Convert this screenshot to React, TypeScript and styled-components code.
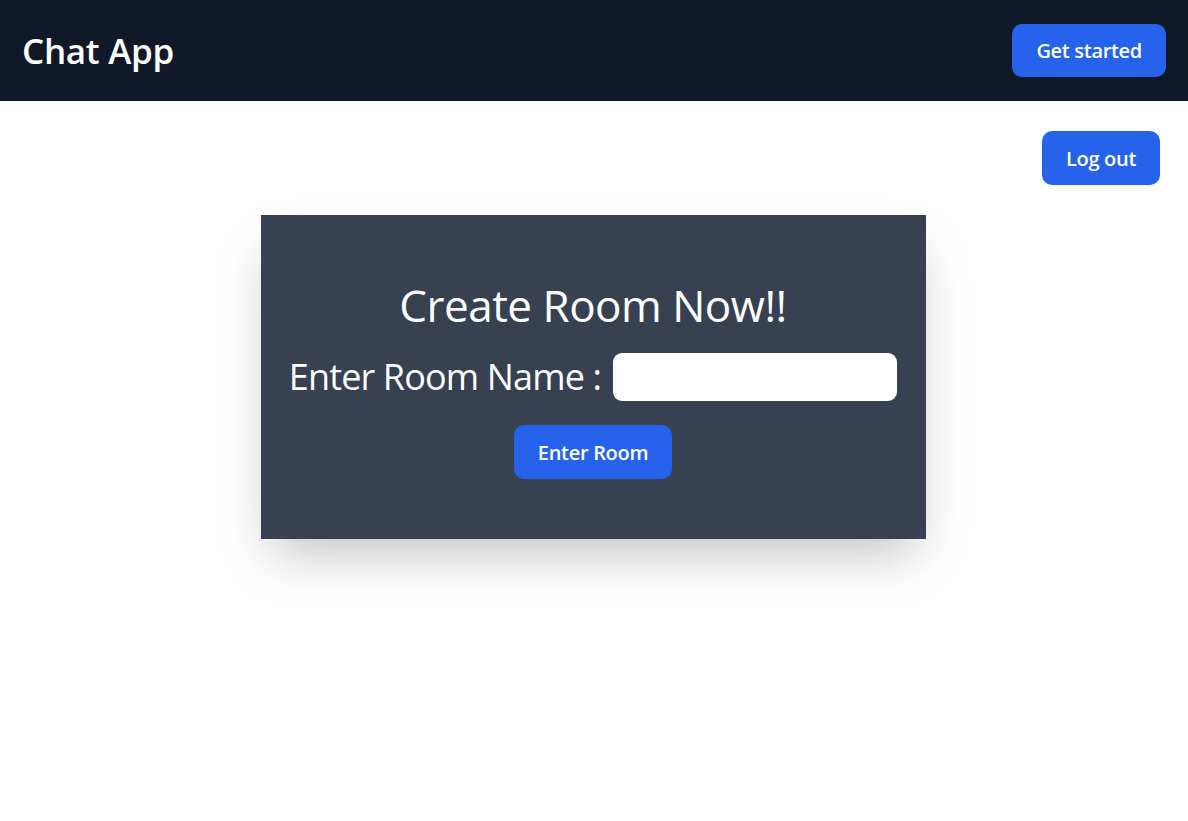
import React, { useState } from "react";
import styled, { createGlobalStyle } from "styled-components";

const COLOR = {
  nav: "#111827",
  card: "#374151",
  brand: "#2563eb",
  white: "#ffffff",
};

const GlobalStyle = createGlobalStyle`
  html, body {
    margin: 0;
    padding: 0;
    background: #ffffff;
    font-family: "Open Sans", "Noto Sans", sans-serif;
  }
  * {
    box-sizing: border-box;
  }
`;

const Page = styled.div`
  min-height: 100vh;
  background: #ffffff;
`;

const NavBar = styled.nav`
  height: 101px;
  background: ${COLOR.nav};
  display: flex;
  align-items: center;
  justify-content: space-between;
  padding: 0 22px;
`;

const Brand = styled.h1`
  margin: 0;
  color: ${COLOR.white};
  font-size: 35px;
  font-weight: 600;
  letter-spacing: -0.3px;
`;

const Button = styled.button<{ $tall?: boolean }>`
  border: none;
  cursor: pointer;
  background: ${COLOR.brand};
  color: ${COLOR.white};
  font-family: inherit;
  font-weight: 600;
  font-size: 20px;
  border-radius: 10px;
  height: ${(p) => (p.$tall ? "54px" : "53px")};
  padding: 0 24px;
  letter-spacing: -0.3px;
`;

const Main = styled.main`
  display: flex;
  flex-direction: column;
  align-items: center;
  padding-bottom: 80px;
`;

const TopActions = styled.div`
  align-self: stretch;
  display: flex;
  justify-content: flex-end;
  padding: 30px 28px 30px 0;
`;

const Card = styled.section`
  width: 665px;
  height: 324px;
  margin-right: 2px;
  background: ${COLOR.card};
  box-shadow: 0 25px 50px -12px rgba(0, 0, 0, 0.25);
  display: flex;
  flex-direction: column;
  align-items: center;
  padding-top: 62px;
  color: ${COLOR.white};
`;

const Title = styled.h2`
  margin: 0;
  font-size: 44px;
  font-weight: 400;
  line-height: 56px;
  letter-spacing: -0.5px;
`;

const FieldRow = styled.div`
  display: flex;
  align-items: center;
  gap: 12px;
  margin-top: 19px;
`;

const Label = styled.label`
  font-size: 36px;
  font-weight: 400;
  letter-spacing: -0.85px;
`;

const TextInput = styled.input`
  width: 284px;
  height: 48px;
  border: none;
  border-radius: 9px;
  background: ${COLOR.white};
  padding: 0 12px;
  font-size: 20px;
  outline: none;
`;

const ButtonRow = styled.div`
  margin-top: 24px;
`;

export default function App() {
  const [room, setRoom] = useState("");

  return (
    <Page>
      <GlobalStyle />
      <NavBar>
        <Brand>Chat App</Brand>
        <Button>Get started</Button>
      </NavBar>
      <Main>
        <TopActions>
          <Button $tall>Log out</Button>
        </TopActions>
        <Card>
          <Title>Create Room Now!!</Title>
          <FieldRow>
            <Label htmlFor="room">Enter Room Name :</Label>
            <TextInput id="room" value={room} onChange={(e) => setRoom(e.target.value)} />
          </FieldRow>
          <ButtonRow>
            <Button $tall>Enter Room</Button>
          </ButtonRow>
        </Card>
      </Main>
    </Page>
  );
}
